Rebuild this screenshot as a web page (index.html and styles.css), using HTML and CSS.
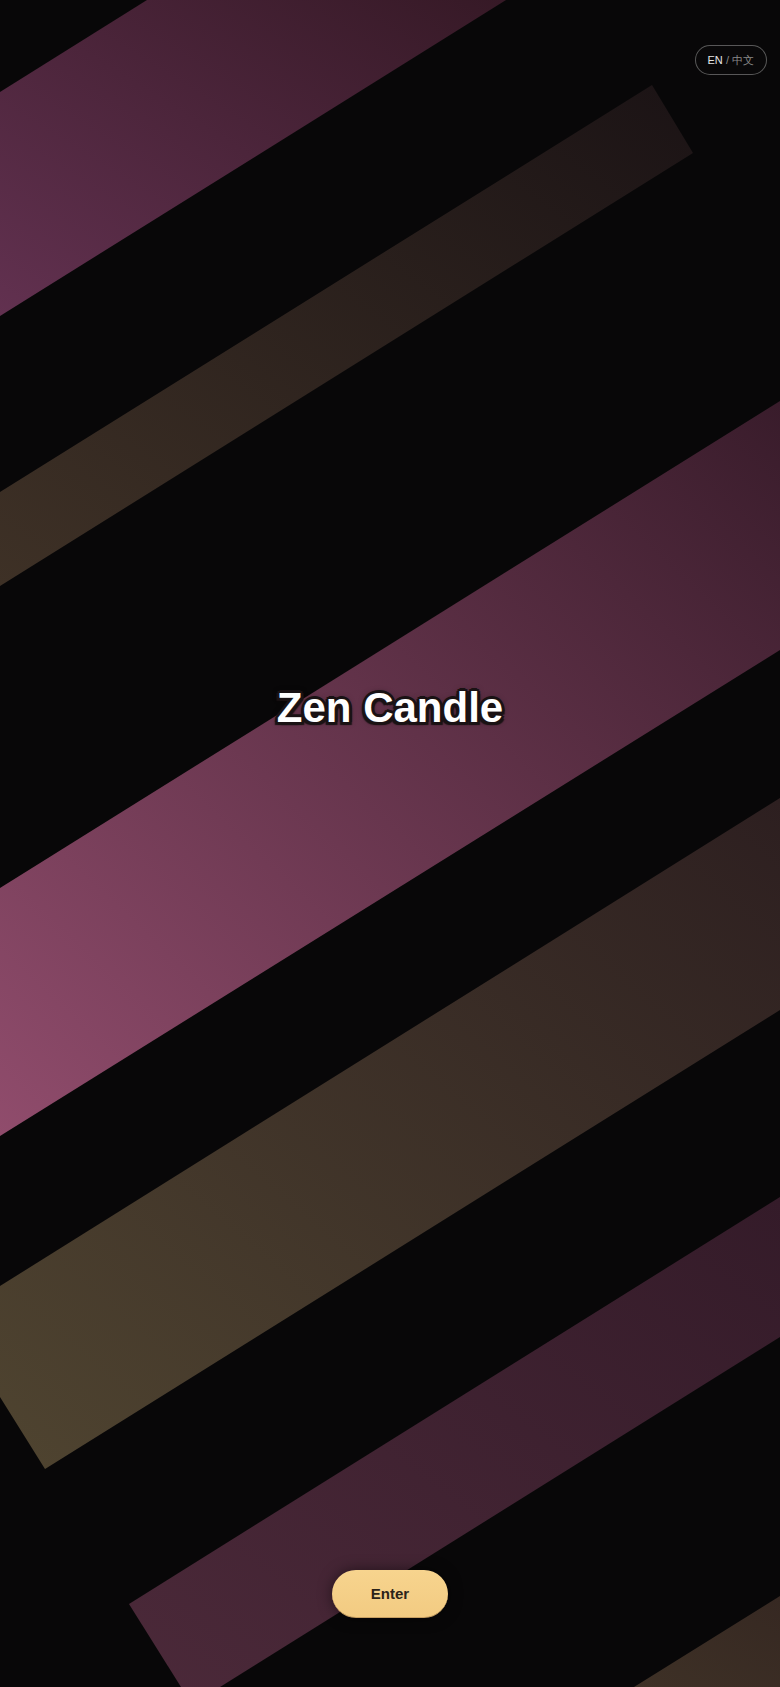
FILE: index.html
```html
<!DOCTYPE html>
<html lang="en">
<head>
<meta charset="utf-8">
<title>Zen Candle</title>
<link rel="stylesheet" href="styles.css">
</head>
<body>
<div class="page">
  <svg class="stripes" viewBox="0 0 780 1687" preserveAspectRatio="none" aria-hidden="true">
    <defs>
      <linearGradient id="g1" x1="0" y1="1" x2="1" y2="0">
        <stop offset="0" stop-color="#623150"/>
        <stop offset="1" stop-color="#361926"/>
      </linearGradient>
      <linearGradient id="g2" x1="0" y1="1" x2="1" y2="0">
        <stop offset="0" stop-color="#3e3126"/>
        <stop offset="1" stop-color="#1b1315"/>
      </linearGradient>
      <linearGradient id="g3" x1="0" y1="1" x2="1" y2="0">
        <stop offset="0" stop-color="#904c6c"/>
        <stop offset="1" stop-color="#391c2b"/>
      </linearGradient>
      <linearGradient id="g4" x1="0" y1="1" x2="1" y2="0">
        <stop offset="0" stop-color="#4f4430"/>
        <stop offset="1" stop-color="#2d1f20"/>
      </linearGradient>
      <linearGradient id="g5" x1="0" y1="1" x2="1" y2="0">
        <stop offset="0" stop-color="#4b2939"/>
        <stop offset="1" stop-color="#341b29"/>
      </linearGradient>
      <linearGradient id="g6" x1="0" y1="1" x2="1" y2="0">
        <stop offset="0" stop-color="#3e3126"/>
        <stop offset="1" stop-color="#362822"/>
      </linearGradient>
    </defs>
    <polygon fill="url(#g1)" points="0,92 147,0 506,0 0,316"/>
    <polygon fill="url(#g2)" points="0,492 652,85 693,153 0,586"/>
    <polygon fill="url(#g3)" points="0,888 780,401 780,650 0,1136"/>
    <polygon fill="url(#g4)" points="0,1286 780,798 780,1010 45,1469 0,1397"/>
    <polygon fill="url(#g5)" points="129,1604 780,1197 780,1337 220,1687 181,1687"/>
    <polygon fill="url(#g6)" points="634,1687 780,1596 780,1687"/>
  </svg>

  <header class="topbar">
    <button class="lang" type="button"><span class="lang-on">EN</span> <span class="lang-off">/ 中文</span></button>
  </header>

  <main class="hero">
    <h1 class="title">Zen Candle</h1>
    <div class="spacer"></div>
    <button class="enter" type="button">Enter</button>
  </main>
</div>
</body>
</html>
```

FILE: styles.css
```css
* {
  box-sizing: border-box;
}

html, body {
  margin: 0;
  padding: 0;
  background: #080708;
}

body {
  font-family: "Liberation Sans", Arial, sans-serif;
  color: #fff;
}

.page {
  position: relative;
  width: 100%;
  height: 100vh;
  min-height: 1687px;
  overflow: hidden;
  display: flex;
  flex-direction: column;
  background: #080708;
}

.stripes {
  position: absolute;
  top: 0;
  left: 0;
  width: 100%;
  height: 100%;
  z-index: 0;
}

.topbar {
  position: relative;
  z-index: 1;
  display: flex;
  justify-content: flex-end;
  padding: 45px 13px 0 0;
}

.lang {
  height: 30px;
  padding: 0 12px;
  border: 1px solid rgba(255, 255, 255, 0.32);
  border-radius: 15px;
  background: rgba(10, 10, 10, 0.6);
  font-family: "Liberation Sans", Arial, sans-serif;
  font-size: 11px;
  line-height: 28px;
  cursor: pointer;
  white-space: nowrap;
}

.lang-on {
  color: #e6e6e6;
}

.lang-off {
  color: #8a8a8a;
}

.hero {
  position: relative;
  z-index: 1;
  flex: 1;
  display: flex;
  flex-direction: column;
  align-items: center;
}

.title {
  margin: 609px 0 0 0;
  font-family: "Liberation Sans", Arial, sans-serif;
  font-weight: 700;
  font-size: 42px;
  line-height: 48px;
  color: #ffffff;
  text-shadow:
    2px 0 0 #1a1214,
    -2px 0 0 #1a1214,
    0 2px 0 #1a1214,
    0 -2px 0 #1a1214,
    2px 2px 0 #1a1214,
    -2px -2px 0 #1a1214,
    2px -2px 0 #1a1214,
    -2px 2px 0 #1a1214,
    3px 0 0 #1a1214,
    -3px 0 0 #1a1214,
    0 3px 0 #1a1214,
    0 -3px 0 #1a1214,
    3px 3px 1px #1a1214,
    -3px 3px 1px #1a1214,
    0 0 6px rgba(0, 0, 0, 0.6);
}

.spacer {
  flex: 1;
}

.enter {
  margin-bottom: 69px;
  width: 116px;
  height: 48px;
  border: none;
  border-bottom: 1px solid #c79f62;
  border-radius: 24px;
  background: linear-gradient(180deg, #f7d48e 0%, #f2cb82 100%);
  color: #2b2319;
  font-family: "Liberation Sans", Arial, sans-serif;
  font-weight: 700;
  font-size: 15px;
  cursor: pointer;
  box-shadow: 0 0 14px rgba(0, 0, 0, 0.5);
}
```
